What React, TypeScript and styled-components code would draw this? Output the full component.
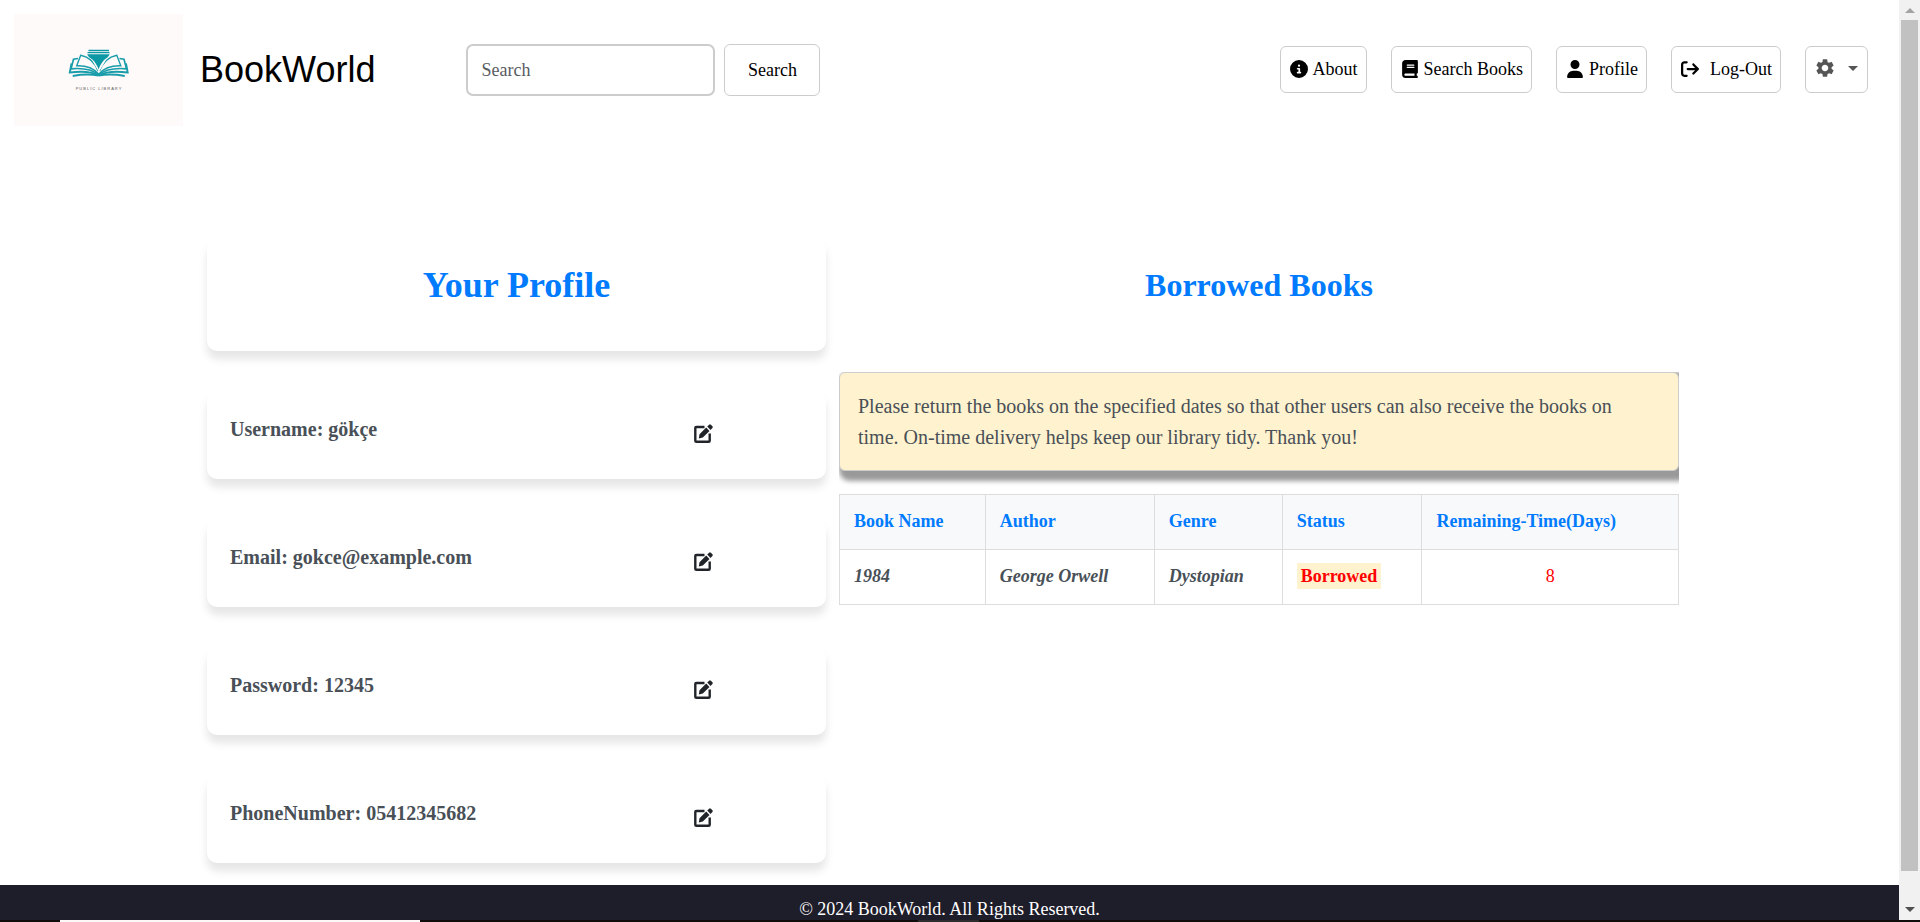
import React from "react";
import styled, { createGlobalStyle } from "styled-components";
import {
  FaArrowRightFromBracket,
  FaBook,
  FaCircleInfo,
  FaUser,
} from "react-icons/fa6";
import { MdSettings } from "react-icons/md";

const GlobalStyle = createGlobalStyle`
  * { box-sizing: border-box; }
  body {
    margin: 0;
    background: #fff;
    color: #212529;
    font: 18px/27px "Liberation Serif", "Times New Roman", serif;
  }
  h1, h2, p { margin: 0; }
  button, input { font: inherit; }
`;

const Screen = styled.div`
  display: grid;
  grid-template-rows: minmax(0, 1fr) 2px;
  height: 100vh;
`;

const Viewport = styled.div`
  display: grid;
  grid-template-columns: minmax(0, 1fr) 21px;
  overflow: hidden;
`;

const Page = styled.div`
  overflow: hidden;
`;

const Header = styled.header`
  display: flex;
  align-items: center;
  padding: 14px 31px 14px 14px;
`;

const Logo = styled.svg`
  width: 169px;
  height: 112px;
  flex: none;
`;

const Brand = styled.a`
  margin-left: 17px;
  color: #000;
  font: 36px/54px "Liberation Sans", Arial, sans-serif;
  text-decoration: none;
`;

const SearchForm = styled.form`
  display: flex;
  gap: 9px;
  margin-left: 91px;
`;

const SearchInput = styled.input`
  width: 249px;
  height: 52px;
  padding: 0 13px;
  border: 2px solid #ccc;
  border-radius: 7px;
  background: #fff;
  &::placeholder { color: #595c5f; opacity: 1; }
`;

const SearchButton = styled.button`
  width: 96px;
  height: 52px;
  border: 1px solid #ccc;
  border-radius: 6px;
  background: #fff;
  color: #000;
`;

const Nav = styled.nav`
  display: flex;
  gap: 24px;
  margin: 0 0 2px auto;
`;

const NavLink = styled.a<{ $gap?: number }>`
  display: flex;
  align-items: center;
  gap: ${(p) => p.$gap ?? 5}px;
  height: 47px;
  padding: 0 8px 0 9px;
  border: 1px solid #ccc;
  border-radius: 6px;
  color: #000;
  text-decoration: none;
  white-space: nowrap;
`;

const SettingsButton = styled.button`
  display: flex;
  align-items: center;
  gap: 12px;
  height: 47px;
  padding: 0 9px 2px 8px;
  border: 1px solid #ccc;
  border-radius: 6px;
  background: #fff;
  color: #555;
`;

const Caret = styled.span`
  border: 5px solid transparent;
  border-top-color: #555;
  border-bottom: 0;
`;

const Main = styled.main`
  display: grid;
  grid-template-columns: minmax(0, 619fr) minmax(0, 840fr);
  gap: 13px;
  padding: 99px 220px 22px 207px;
`;

const Profile = styled.section`
  display: flex;
  flex-direction: column;
  gap: 40px;
`;

const Card = styled.div`
  border-radius: 10px;
  background: #fff;
  box-shadow: 0 8px 8px rgba(0, 0, 0, 0.1);
`;

const TitleCard = styled(Card)`
  height: 112px;
  padding-top: 19px;
  text-align: center;
`;

const ProfileTitle = styled.h1`
  color: #007bff;
  font-size: 36px;
  line-height: 54px;
`;

const FieldCard = styled(Card)`
  display: grid;
  grid-template-columns: 464fr 132fr;
  height: 88px;
  padding: 25px 0 0 23px;
`;

const FieldText = styled.p`
  color: #495057;
  font-size: 20px;
  line-height: 27px;
  font-weight: 700;
`;

const EditButton = styled.button`
  display: flex;
  justify-self: start;
  align-self: start;
  padding: 8px 0 0;
  border: 0;
  background: none;
  color: #212529;
`;

const Borrowed = styled.section`
  min-width: 0;
`;

const BorrowedTitle = styled.h2`
  padding: 22px 0 63px;
  color: #007bff;
  font-size: 32px;
  line-height: 48px;
  text-align: center;
`;

const BorrowedBody = styled.div`
  overflow: hidden;
`;

const Notice = styled.p`
  margin-bottom: 23px;
  padding: 18px 36px 17px 18px;
  border: 1px solid #ccc;
  border-radius: 6px;
  background: #fff2cf;
  box-shadow: 5px 5px 5px 5px rgba(0, 0, 0, 0.4);
  color: #495057;
  font-size: 20px;
  line-height: 31px;
`;

const BookTable = styled.table`
  width: 100%;
  border-collapse: collapse;
  th, td {
    padding: 13px 14px 14px;
    border: 1px solid #ddd;
    text-align: left;
  }
  th {
    background: #f8f9fb;
    color: #007bff;
  }
`;

const BookCell = styled.td`
  color: #495057;
  font-weight: 700;
  font-style: italic;
`;

const Status = styled.span`
  padding: 3px 4px;
  background: #fff2cf;
  color: red;
  font-weight: 700;
`;

const DaysCell = styled.td`
  && { text-align: center; }
  color: red;
`;

const Footer = styled.footer`
  padding: 11px 0 28px;
  background: #1e1d2a;
  color: #fff;
  text-align: center;
`;

const ScrollBar = styled.div`
  display: flex;
  flex-direction: column;
  align-items: center;
  padding: 8px 0;
  background: #f1f1f1;
`;

const Arrow = styled.span<{ $down?: boolean }>`
  border: 5px solid transparent;
  ${(p) =>
    p.$down
      ? "border-top-color: #505050; border-bottom: 0;"
      : "border-bottom-color: #a3a3a3; border-top: 0;"}
`;

const Thumb = styled.div`
  width: 17px;
  flex: 1;
  margin: 7px 0 36px;
  background: #c1c1c1;
`;

const TaskStrip = styled.div`
  display: grid;
  grid-template-columns: 60fr 360fr 498fr 61fr 941fr;
  background: #110c0c;
`;

const TaskItem = styled.span<{ $color: string; $column: number }>`
  grid-column: ${(p) => p.$column};
  background: ${(p) => p.$color};
`;

const fields = [
  { label: "Username", value: "gökçe" },
  { label: "Email", value: "gokce@example.com" },
  { label: "Password", value: "12345" },
  { label: "PhoneNumber", value: "05412345682" },
];

const books = [
  { name: "1984", author: "George Orwell", genre: "Dystopian", status: "Borrowed", days: 8 },
];

function EditIcon() {
  return (
    <svg width="19" height="19" viewBox="0 0 19 19" aria-hidden="true">
      <path
        d="M10.500 3H2.300Q1.300 3 1.300 4v12.700q0 1 1 1h12.400q1 0 1-1V9.500"
        fill="none"
        stroke="currentColor"
        strokeWidth="2.400"
      />
      <path
        d="M12.200 3.600l3.300 3.300-6.700 6.700-4 .8.700-4.100zM13.200 2.600 15.100.7q.9-.8 1.800 0L18.400 2.200q.8.900 0 1.800L16.500 5.900z"
        fill="currentColor"
      />
    </svg>
  );
}

function BookHalf({ mirrored = false }: { mirrored?: boolean }) {
  return (
    <g
      fill="none"
      stroke="#1a9dab"
      strokeWidth="1.4"
      transform={mirrored ? "translate(169.500 0) scale(-1 1)" : undefined}
    >
      <path d="M84 57C81 49 75 43 66.700 41.300L62.700 51.800C72 51.500 79 53.500 84.500 60" />
      <path d="M64 44.500l-4.500 .7L57 54.800c11-1 21 .5 28 6" strokeWidth="1.700" />
      <path d="M57.500 49.500 55.800 58.500c11-1.500 21-1.200 29 2.700" strokeWidth="1.900" />
      <path d="M58.700 62c9-1.700 18-2 26-.4" strokeWidth="1.900" />
    </g>
  );
}

function LibraryLogo() {
  return (
    <Logo viewBox="0 0 169 112" role="img" aria-label="Public Library">
      <rect width="169" height="112" fill="#fffafa" />
      <BookHalf />
      <BookHalf mirrored />
      <path d="M71.500 40h26L92 46l-7.200 12L78 46z" fill="#fffafa" />
      <g fill="#0d98a6">
        <path d="M74.500 35.800h20.500v1.400H74.500zM73.500 38h22v1.200h-22z" />
        <path d="M73.300 40.200h22.200c-.5 2.800-4 4-6.500 7-2 2.500-3.500 5.300-4.400 8.300-1-3-2.500-5.800-4.500-8.300-2.500-3-6.300-4.200-6.800-7z" />
      </g>
      <text
        x="85"
        y="76"
        textAnchor="middle"
        fontFamily="Liberation Sans, sans-serif"
        fontSize="4"
        letterSpacing="1"
        fill="#555"
      >
        PUBLIC LIBRARY
      </text>
    </Logo>
  );
}

export default function App() {
  return (
    <Screen>
      <GlobalStyle />
      <Viewport>
        <Page>
          <Header>
            <LibraryLogo />
            <Brand href="#home">BookWorld</Brand>
            <SearchForm role="search" onSubmit={(e: React.FormEvent) => e.preventDefault()}>
              <SearchInput type="search" placeholder="Search" aria-label="Search" />
              <SearchButton type="submit">Search</SearchButton>
            </SearchForm>
            <Nav>
              <NavLink href="#about"><FaCircleInfo />About</NavLink>
              <NavLink href="#books"><FaBook width={16} height={18} />Search Books</NavLink>
              <NavLink href="#profile"><FaUser width={16} height={18} />Profile</NavLink>
              <NavLink href="#logout" $gap={11}><FaArrowRightFromBracket />Log-Out</NavLink>
              <SettingsButton type="button" aria-label="Settings">
                <MdSettings size={22} />
                <Caret />
              </SettingsButton>
            </Nav>
          </Header>
          <Main>
            <Profile>
              <TitleCard>
                <ProfileTitle>Your Profile</ProfileTitle>
              </TitleCard>
              {fields.map((f) => (
                <FieldCard key={f.label}>
                  <FieldText>{f.label}: {f.value}</FieldText>
                  <EditButton type="button" aria-label={`Edit ${f.label}`}>
                    <EditIcon />
                  </EditButton>
                </FieldCard>
              ))}
            </Profile>
            <Borrowed>
              <BorrowedTitle>Borrowed Books</BorrowedTitle>
              <BorrowedBody>
                <Notice>
                  Please return the books on the specified dates so that other users can also
                  receive the books on time. On-time delivery helps keep our library tidy. Thank you!
                </Notice>
                <BookTable>
                  <thead>
                    <tr>
                      <th scope="col">Book Name</th>
                      <th scope="col">Author</th>
                      <th scope="col">Genre</th>
                      <th scope="col">Status</th>
                      <th scope="col">Remaining-Time(Days)</th>
                    </tr>
                  </thead>
                  <tbody>
                    {books.map((b) => (
                      <tr key={b.name}>
                        <BookCell>{b.name}</BookCell>
                        <BookCell>{b.author}</BookCell>
                        <BookCell>{b.genre}</BookCell>
                        <td><Status>{b.status}</Status></td>
                        <DaysCell>{b.days}</DaysCell>
                      </tr>
                    ))}
                  </tbody>
                </BookTable>
              </BorrowedBody>
            </Borrowed>
          </Main>
          <Footer>© 2024 BookWorld. All Rights Reserved.</Footer>
        </Page>
        <ScrollBar aria-hidden="true">
          <Arrow />
          <Thumb />
          <Arrow $down />
        </ScrollBar>
      </Viewport>
      <TaskStrip aria-hidden="true">
        <TaskItem $column={2} $color="#fdf8f8" />
        <TaskItem $column={4} $color="#2e2c2c" />
      </TaskStrip>
    </Screen>
  );
}
